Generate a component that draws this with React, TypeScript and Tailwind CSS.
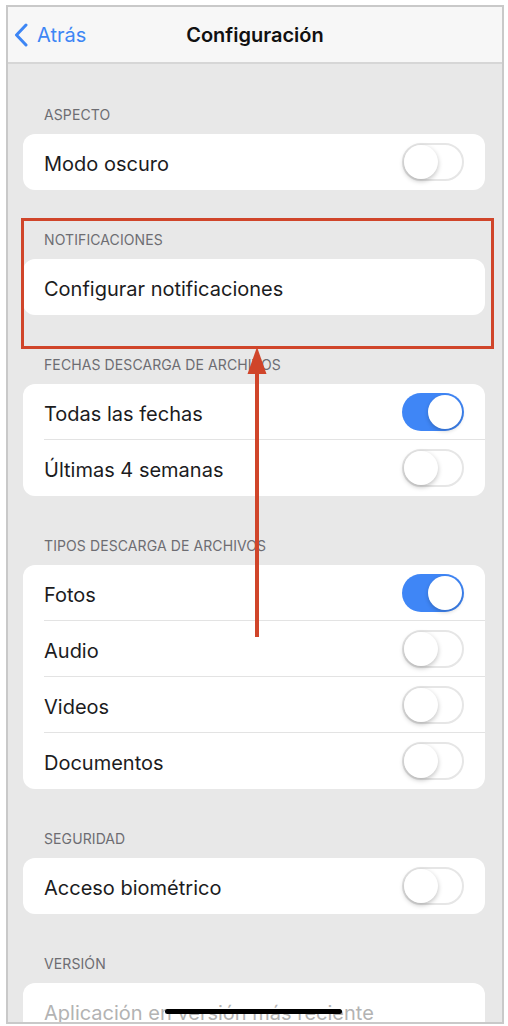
import React from "react";

const font = { fontFamily: "Inter, 'Liberation Sans', Arial, sans-serif" };

function Toggle({ on }: { on?: boolean }) {
  return on ? (
    <div className="relative h-[38px] w-[62px] rounded-full bg-[#3f86f6]">
      <div className="absolute right-[2px] top-[2px] h-[34px] w-[34px] rounded-full bg-white shadow-[0_2px_4px_rgba(0,0,0,0.2)]" />
    </div>
  ) : (
    <div className="relative h-[38px] w-[62px] rounded-full border-2 border-[#e6e6e6] bg-white">
      <div className="absolute left-[0px] top-[0px] h-[34px] w-[34px] rounded-full bg-white shadow-[0_2px_5px_rgba(0,0,0,0.25)]" />
    </div>
  );
}

function Label({ children, first }: { children: React.ReactNode; first?: boolean }) {
  return (
    <div
      className={
        "flex items-end pb-[11px] pl-[36px] text-[14px] leading-[16px] tracking-[0.1px] text-[#6d6d72] " +
        (first ? "h-[70px]" : "h-[69px]")
      }
    >
      {children}
    </div>
  );
}

function Row({ text, toggle, on, last, muted }: { text: string; toggle?: boolean; on?: boolean; last?: boolean; muted?: boolean }) {
  return (
    <div className="relative flex h-[56px] items-center pl-[21px] pr-[21px]">
      <span className={"flex-1 pt-[3px] text-[20px] " + (muted ? "text-[#b3b3b3]" : "text-[#1c1c1e]")}>{text}</span>
      {toggle && <Toggle on={on} />}
      {!last && <div className="absolute bottom-0 left-[21px] right-0 h-px bg-[#e3e3e3]" />}
    </div>
  );
}

function Card({ children }: { children: React.ReactNode }) {
  return <div className="ml-[15px] mr-[17px] rounded-[12px] bg-white">{children}</div>;
}

export default function App() {
  return (
    <div className="min-h-[1026px] bg-white pl-[6px] pt-[5px]" style={font}>
      <div className="relative h-[1019px] w-[498px] overflow-hidden border-2 border-[#c9c9c9] bg-[#e8e8e8]">
        <div className="relative flex h-[57px] items-center justify-center border-b-2 border-[#d6d6d6] bg-[#f7f7f7]">
          <div className="absolute left-[6px] top-0 flex h-full items-center gap-[9px] text-[#3d86f5]">
            <svg width="14" height="24" viewBox="0 0 14 24" fill="none">
              <path d="M12 2 L2.5 12 L12 22" stroke="#3d86f5" strokeWidth="3" strokeLinecap="round" strokeLinejoin="round" />
            </svg>
            <span className="text-[20px]">Atrás</span>
          </div>
          <span className="text-[20px] font-semibold text-[#111]">Configuración</span>
        </div>

        <Label first>ASPECTO</Label>
        <Card>
          <Row text="Modo oscuro" toggle last />
        </Card>

        <Label>NOTIFICACIONES</Label>
        <Card>
          <Row text="Configurar notificaciones" last />
        </Card>

        <Label>FECHAS DESCARGA DE ARCHIVOS</Label>
        <Card>
          <Row text="Todas las fechas" toggle on />
          <Row text="Últimas 4 semanas" toggle last />
        </Card>

        <Label>TIPOS DESCARGA DE ARCHIVOS</Label>
        <Card>
          <Row text="Fotos" toggle on />
          <Row text="Audio" toggle />
          <Row text="Videos" toggle />
          <Row text="Documentos" toggle last />
        </Card>

        <Label>SEGURIDAD</Label>
        <Card>
          <Row text="Acceso biométrico" toggle last />
        </Card>

        <Label>VERSIÓN</Label>
        <Card>
          <Row text="Aplicación en versión más reciente" muted last />
        </Card>

        {/* highlight box */}
        <div className="absolute left-[13px] top-[211px] h-[131px] w-[473px] border-[3px] border-[#d0452a]" />
        {/* arrow */}
        <svg className="absolute left-[238px] top-[340px]" width="22" height="290" viewBox="0 0 22 290">
          <rect x="9" y="20" width="4" height="270" fill="#d0452a" />
          <path d="M11 0 L20.5 27 L1.5 27 Z" fill="#d0452a" />
        </svg>
        {/* home indicator */}
        <div className="absolute left-[157px] top-[1002px] h-[5px] w-[177px] rounded-full bg-black" />
      </div>
    </div>
  );
}
